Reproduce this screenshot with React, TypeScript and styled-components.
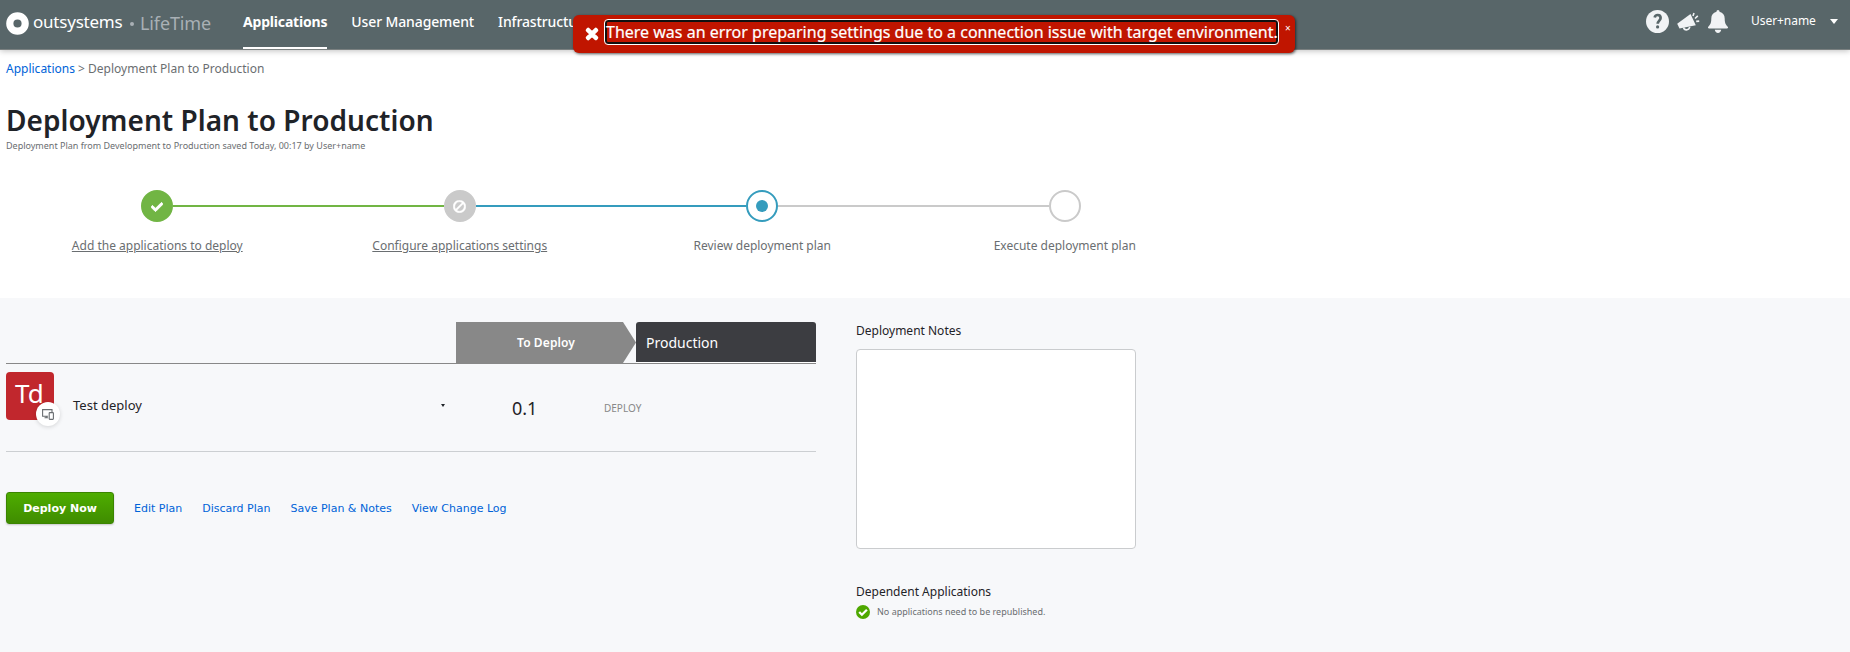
import React from "react";
import styled, { createGlobalStyle } from "styled-components";
import { FaCheck, FaBan, FaTimes, FaCheckCircle } from "react-icons/fa";

const Global = createGlobalStyle`
  * { box-sizing: border-box; }
  body { margin: 0; background: #fff; color: #6a6e71; font: 12px/16px "Noto Sans", sans-serif; }
  svg { display: block; flex: none; }
`;

const Page = styled.div`
  width: 1850px; height: 652px; overflow: hidden; position: relative;
  display: flex; flex-direction: column;
`;
const Header = styled.header`
  flex: none; height: 50px; padding: 0 12px 0 6px; display: flex; align-items: flex-start;
  background: #586669; border-bottom: 1px solid #7a8080; color: #fff;
  box-shadow: 0 1px 6px rgba(0, 0, 0, 0.25); position: relative;
`;
const Brand = styled.div`
  display: flex; align-items: center; width: 237px; height: 47px;
  white-space: nowrap;
`;
const BrandName = styled.span`
  font-size: 17px; line-height: 24px; margin: 0 7px 3px 4px; width: 90px; letter-spacing: -0.22px;
`;
const Dot = styled.i`
  width: 4px; height: 4px; border-radius: 50%; background: #a9b0b5; margin-right: 6px;
`;
const Product = styled.span`
  font-size: 18px; line-height: 24px; margin-bottom: 1px; font-weight: 400; color: #a9b0b5; letter-spacing: -0.12px;
`;
const Nav = styled.nav` display: flex; gap: 24px; flex: 1; `;
const NavItem = styled.a<{ $active?: boolean }>`
  height: 49px; padding-top: 12px; font-size: 14px; line-height: 20px;
  font-weight: ${p => (p.$active ? 700 : 500)}; white-space: nowrap;
  letter-spacing: ${p => (p.$active ? -0.18 : -0.12)}px;
  border-bottom: 2px solid ${p => (p.$active ? "#fff" : "transparent")};
`;
const Tools = styled.div` display: flex; align-items: center; height: 43px; gap: 8px; `;
const User = styled.span` font-size: 12px; margin: -2px 6px 0 15px; width: 65px; white-space: nowrap; letter-spacing: -0.05px; `;
const Caret = styled.i<{ $size: number; $color: string }>`
  display: block; width: 0; height: 0; border: ${p => p.$size}px solid transparent; border-bottom: 0;
  border-top: ${p => p.$size + 1}px solid ${p => p.$color};
`;

const Toast = styled.div`
  position: absolute; left: 573px; top: 15px; width: 722px; height: 38px; border-radius: 6px;
  background: #c01500; color: #fff; display: flex; padding: 4px 4px 0 11px; align-items: flex-start;
  box-shadow: 1px 1px 3px rgba(0, 0, 0, 0.6);
`;
const ToastIcon = styled.div`
  padding-top: 7px; width: 20px;
  path { stroke: #fff; stroke-width: 50; }
`;
const ToastText = styled.div`
  height: 26px; width: 675px; border: 1px solid #fff; border-radius: 4px; padding-left: 1px;
  box-shadow: inset 0 0 0 2px #101010; font-size: 16px; line-height: 25px; white-space: nowrap; font-weight: 400;
  -webkit-text-stroke: 0.2px #fff;
`;
const ToastClose = styled.span` margin: 1px 0 0 6px; font-size: 10px; line-height: 16px; `;

const Intro = styled.section` flex: none; height: 248px; padding: 11px 6px 0; `;
const Crumbs = styled.div` font-size: 12px; line-height: 16px; `;
const Link = styled.a` color: #0063d8; white-space: nowrap; `;
const Title = styled.h1`
  margin: 25px 0 0; font-size: 28px; line-height: 36px; font-weight: 600; color: #1f2328; white-space: nowrap;
  letter-spacing: 0.03px;
`;
const Sub = styled.div` margin-top: 1px; font-size: 9px; line-height: 14px; `;
const Steps = styled.div` display: flex; width: 1210px; margin-top: 37px; `;
const Step = styled.div`
  flex: 1; display: flex; flex-direction: column; align-items: center;
`;
const Track = styled.div` display: flex; align-items: center; width: 100%; `;
const Line = styled.i<{ $color?: string }>` flex: 1; height: 2px; background: ${p => p.$color || "transparent"}; `;
const Disc = styled.div<{ $fill: string; $ring: string }>`
  width: 32px; height: 32px; border-radius: 50%; display: flex; align-items: center; justify-content: center;
  background: ${p => p.$fill}; border: 2px solid ${p => p.$ring}; color: #fff;
`;
const Done = styled(FaCheck)` margin-top: 1px; stroke: #fff; stroke-width: 36; `;
const Skipped = styled(FaBan)` transform: scaleX(-1); stroke: #fff; stroke-width: 18; `;
const Core = styled.i` width: 12px; height: 12px; border-radius: 50%; background: #359cbd; `;
const StepLabel = styled.span<{ $link?: boolean }>`
  margin-top: 16px; text-decoration: ${p => (p.$link ? "underline" : "none")};
`;

const Main = styled.main` flex: 1; background: #f7f8fa; padding: 24px 6px 0; display: flex; gap: 40px; `;
const Plan = styled.div` width: 810px; `;
const TableHead = styled.div`
  display: flex; height: 42px; padding-left: 450px; border-bottom: 1px solid #888;
`;
const Stage = styled.div`
  width: 180px; height: 41px; background: #888; color: #fff; text-align: center;
  font-weight: 600; line-height: 41px; letter-spacing: 0.1px; clip-path: polygon(0 0, 167px 0, 100% 50%, 167px 100%, 0 100%);
`;
const Target = styled.div`
  width: 180px; height: 41px; background: #3c3d41; color: #fff; border-radius: 3px 3px 0 0;
  border-bottom: 1px solid #fff; padding-left: 10px; font-size: 14px; line-height: 41px;
`;
const Row = styled.div` display: flex; height: 88px; border-bottom: 1px solid #cccfd2; color: #1f2328; `;
const AppTile = styled.div`
  width: 48px; height: 48px; margin-top: 8px; border-radius: 4px; background: #c1272d; color: #fff;
  font-size: 26px; line-height: 43px; padding-left: 9px; position: relative; font-weight: 400;
`;
const Badge = styled.div`
  position: absolute; left: 30px; top: 30px; width: 24px; height: 24px; border-radius: 50%; background: #fff;
  display: flex; align-items: center; justify-content: center; box-shadow: 0 1px 4px rgba(0, 0, 0, 0.15);
`;
const AppName = styled.div` margin: 32px 0 0 19px; width: 368px; font-size: 13px; line-height: 18px; `;
const RowCaret = styled.div` width: 71px; padding-top: 40px; `;
const Version = styled.div` width: 92px; padding-top: 32px; font-size: 18px; line-height: 24px; `;
const Action = styled.div` padding-top: 36px; font-size: 10px; line-height: 16px; color: #888; `;
const Buttons = styled.div`
  display: flex; align-items: center; gap: 20px; margin-top: 40px; font: 11px/16px "DejaVu Sans", sans-serif;
  ${Link} { padding-top: 1px; }
`;
const Primary = styled.button`
  width: 108px; height: 32px; padding: 0; border: 1px solid #3b8500; border-radius: 3px; color: #fff;
  background: linear-gradient(#4ead00, #3f8c00); font: bold 11px "DejaVu Sans", sans-serif;
  box-shadow: 0 1px 2px rgba(0, 0, 0, 0.2);
`;
const Side = styled.aside` width: 280px; color: #1f2328; `;
const Notes = styled.textarea`
  display: block; width: 280px; height: 200px; margin: 10px 0 35px; resize: none;
  border: 1px solid #caccce; border-radius: 4px; background: #fff;
`;
const Label = styled.div` line-height: 16px; `;
const NotesLabel = styled(Label)` padding-top: 1px; `;
const Status = styled.div`
  display: flex; align-items: center; gap: 7px; margin-top: 5px; font-size: 9px; line-height: 14px; color: #6a6e71;
`;
const StatusMark = styled.svg` width: 14px; height: 14px; `;

const Ring = () => (
  <svg width="23" height="23" viewBox="0 0 23 23"><circle cx="11.5" cy="11.5" r="7.7" fill="none" stroke="#fff" strokeWidth="7.2" /></svg>
);
const Help = () => (
  <svg width="23" height="23" viewBox="0 0 23 23">
    <circle cx="11.5" cy="11.5" r="11.5" fill="#f1f3f5" />
    <path d="M8.700 7.400C9 5.700 10.300 5 11.700 5c1.700 0 2.900 1 2.900 2.900 0 2.600-2.900 2.800-2.900 5.900" fill="none" stroke="#586669" strokeWidth="2.700" />
    <circle cx="11.600" cy="16.900" r="1.600" fill="#586669" />
  </svg>
);
const Megaphone = () => (
  <svg width="23" height="20" viewBox="0 0 23 20" fill="#f1f3f5">
    <path d="M13.500 2 18.800 13.200 2.500 16.500.2 11.800z" />
    <path d="M6.500 15.500c.7 3 5.200 3.500 6.300-.6" fill="none" stroke="#f1f3f5" strokeWidth="1.600" />
    <path d="m16 4 1-3M18 6.500l2.800-2.600M19.200 9.400l3-.3" stroke="#f1f3f5" strokeWidth="1.600" />
  </svg>
);
const Bell = () => (
  <svg width="20" height="23" viewBox="0 0 20 23" fill="#f1f3f5">
    <path d="M10 0c.9 0 1.500.7 1.500 1.800 3.500.8 5.200 3.300 5.200 6.800 0 4.800 1.200 6.300 3 8.100.7.8.2 1.800-.8 1.800H1.100c-1 0-1.500-1-.8-1.800 1.800-1.800 3-3.300 3-8.100 0-3.500 1.700-6 5.200-6.800C8.500.7 9.100 0 10 0zM6.800 19.800h6.400C13 21.800 11.700 23 10 23s-3-1.200-3.200-3.200z" />
  </svg>
);
const Devices = () => (
  <svg width="12" height="11" viewBox="0 0 12 11" fill="none" stroke="#6a6e71" strokeWidth="1.1">
    <path d="M10 3V.6H.6v6.700H6M2.500 8.800H6M4.200 7.300v1.500" /><rect x="7.200" y="3.600" width="4.200" height="6.800" rx=".6" />
  </svg>
);

export default function App() {
  return (
    <Page>
      <Global />
      <Header>
        <Brand><Ring /><BrandName>outsystems</BrandName><Dot /><Product>LifeTime</Product></Brand>
        <Nav>
          <NavItem $active>Applications</NavItem>
          <NavItem>User Management</NavItem>
          <NavItem>Infrastructure</NavItem>
        </Nav>
        <Tools>
          <Help /><Megaphone /><Bell />
          <User>User+name</User>
          <Caret $size={4} $color="#fff" />
        </Tools>
        <Toast>
          <ToastIcon><FaTimes size={16} /></ToastIcon>
          <ToastText>There was an error preparing settings due to a connection issue with target environment.</ToastText>
          <ToastClose>×</ToastClose>
        </Toast>
      </Header>
      <Intro>
        <Crumbs><Link>Applications</Link> &gt; Deployment Plan to Production</Crumbs>
        <Title>Deployment Plan to Production</Title>
        <Sub>Deployment Plan from Development to Production saved Today, 00:17 by User+name</Sub>
        <Steps>
          <Step>
            <Track><Line /><Disc $fill="#71b544" $ring="#71b544"><Done size={12} /></Disc><Line $color="#71b544" /></Track>
            <StepLabel $link>Add the applications to deploy</StepLabel>
          </Step>
          <Step>
            <Track><Line $color="#71b544" /><Disc $fill="#cacaca" $ring="#cacaca"><Skipped size={13} /></Disc><Line $color="#359cbd" /></Track>
            <StepLabel $link>Configure applications settings</StepLabel>
          </Step>
          <Step>
            <Track><Line $color="#359cbd" /><Disc $fill="#fff" $ring="#359cbd"><Core /></Disc><Line $color="#cacaca" /></Track>
            <StepLabel>Review deployment plan</StepLabel>
          </Step>
          <Step>
            <Track><Line $color="#cacaca" /><Disc $fill="#fff" $ring="#cacaca" /><Line /></Track>
            <StepLabel>Execute deployment plan</StepLabel>
          </Step>
        </Steps>
      </Intro>
      <Main>
        <Plan>
          <TableHead><Stage>To Deploy</Stage><Target>Production</Target></TableHead>
          <Row>
            <AppTile>Td<Badge><Devices /></Badge></AppTile>
            <AppName>Test deploy</AppName>
            <RowCaret><Caret $size={2} $color="#1f2328" /></RowCaret>
            <Version>0.1</Version>
            <Action>DEPLOY</Action>
          </Row>
          <Buttons>
            <Primary>Deploy Now</Primary>
            <Link>Edit Plan</Link><Link>Discard Plan</Link><Link>Save Plan &amp; Notes</Link><Link>View Change Log</Link>
          </Buttons>
        </Plan>
        <Side>
          <NotesLabel>Deployment Notes</NotesLabel>
          <Notes />
          <Label>Dependent Applications</Label>
          <Status>
            <StatusMark viewBox="0 0 14 14">
              <circle cx="7" cy="7" r="7" fill="#4ea800" />
              <path d="m3.200 7 2.700 2.700 5-5" fill="none" stroke="#fff" strokeWidth="2.300" />
            </StatusMark>
            No applications need to be republished.
          </Status>
        </Side>
      </Main>
    </Page>
  );
}
